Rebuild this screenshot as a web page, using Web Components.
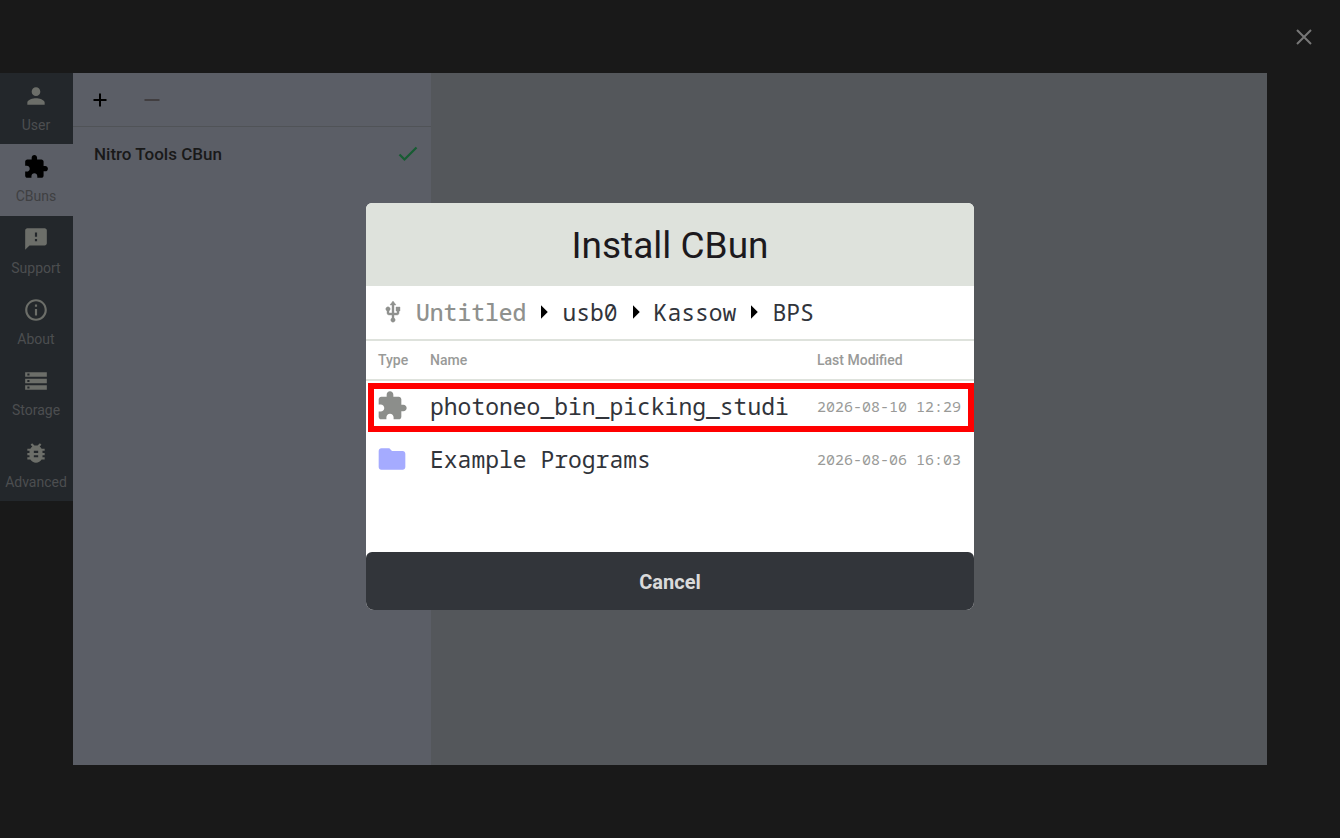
<!DOCTYPE html>
<html lang="en">
<head>
<meta charset="utf-8">
<meta name="viewport" content="width=device-width, initial-scale=1">
<title>Install CBun</title>
<style>
  html, body { height: 100%; }
  body { margin: 0; background: #191919; font-family: Roboto, "Liberation Sans", sans-serif; }
</style>
</head>
<body>
<app-shell>
  <side-nav slot="nav">
    <nav-item icon="person">User</nav-item>
    <nav-item icon="puzzle" active>CBuns</nav-item>
    <nav-item icon="feedback">Support</nav-item>
    <nav-item icon="info">About</nav-item>
    <nav-item icon="storage">Storage</nav-item>
    <nav-item icon="bug">Advanced</nav-item>
  </side-nav>
  <bundle-list slot="list">
    <bundle-item>Nitro Tools CBun</bundle-item>
  </bundle-list>
  <install-dialog slot="dialog">
    <span slot="title">Install CBun</span>
    <path-bar slot="path"></path-bar>
    <file-table slot="files"></file-table>
  </install-dialog>
</app-shell>

<script>
const ICONS = {
  person: '<path d="M12 12c2.210 0 4-1.790 4-4s-1.790-4-4-4-4 1.790-4 4 1.790 4 4 4zm0 2c-2.670 0-8 1.340-8 4v2h16v-2c0-2.660-5.330-4-8-4z"/>',
  puzzle: '<path d="M20.500 11H19V7c0-1.100-.9-2-2-2h-4V3.500C13 2.120 11.880 1 10.500 1S8 2.120 8 3.500V5H4c-1.100 0-1.990.9-1.990 2v3.800H3.500c1.490 0 2.700 1.210 2.700 2.700s-1.210 2.700-2.700 2.700H2V20c0 1.100.9 2 2 2h3.800v-1.500c0-1.490 1.210-2.700 2.700-2.700 1.490 0 2.700 1.210 2.700 2.700V22H17c1.100 0 2-.9 2-2v-4h1.500c1.380 0 2.500-1.120 2.500-2.500S21.880 11 20.500 11z"/>',
  feedback: '<path d="M20 2H4c-1.100 0-1.990.9-1.990 2L2 22l4-4h14c1.100 0 2-.9 2-2V4c0-1.100-.9-2-2-2zm-7 12h-2v-2h2v2zm0-4h-2V6h2v4z"/>',
  info: '<path d="M11 17h2v-6h-2v6zm1-15C6.480 2 2 6.480 2 12s4.480 10 10 10 10-4.480 10-10S17.520 2 12 2zm0 18c-4.410 0-8-3.590-8-8s3.590-8 8-8 8 3.590 8 8-3.590 8-8 8zM11 9h2V7h-2v2z"/>',
  storage: '<path d="M2 20h20v-4H2v4zm2-3h2v2H4v-2zM2 4v4h20V4H2zm4 3H4V5h2v2zm-4 7h20v-4H2v4zm2-3h2v2H4v-2z"/>',
  bug: '<path d="M20 8h-2.810c-.45-.78-1.070-1.450-1.820-1.960L17 4.410 15.590 3l-2.170 2.170C12.960 5.060 12.490 5 12 5s-.96.06-1.410.17L8.410 3 7 4.410l1.620 1.630C7.880 6.550 7.260 7.220 6.810 8H4v2h2.090c-.05.33-.09.66-.09 1v1H4v2h2v1c0 .34.04.67.09 1H4v2h2.810c1.040 1.790 2.970 3 5.190 3s4.150-1.210 5.190-3H20v-2h-2.090c.05-.33.09-.66.09-1v-1h2v-2h-2v-1c0-.34-.04-.67-.09-1H20V8zm-6 8h-4v-2h4v2zm0-4h-4v-2h4v2z"/>',
  folder: '<path d="M10 4H4c-1.100 0-1.990.9-1.990 2L2 18c0 1.100.9 2 2 2h16c1.100 0 2-.9 2-2V8c0-1.100-.9-2-2-2h-8l-2-2z"/>',
  usb: '<path d="M15 7v4h1v2h-3V5h2l-3-4-3 4h2v8H8v-2.070c.7-.37 1.200-1.080 1.200-1.930 0-1.210-.99-2.200-2.200-2.200-1.210 0-2.200.99-2.200 2.200 0 .85.5 1.560 1.200 1.930V13c0 1.110.89 2 2 2h3v3.050c-.71.37-1.200 1.100-1.200 1.950 0 1.220.99 2.200 2.200 2.200 1.210 0 2.200-.98 2.200-2.200 0-.85-.49-1.580-1.200-1.950V15h3c1.110 0 2-.89 2-2v-2h1V7h-4z" stroke="currentColor" stroke-width=".4"/>',
  plus: '<path d="M12 5.500v13M5.500 12h13" fill="none" stroke="currentColor" stroke-width="2"/>',
  minus: '<path d="M4.500 12h15" fill="none" stroke="currentColor" stroke-width="2"/>',
  close: '<path d="M5 5l14 14M19 5L5 19" fill="none" stroke="currentColor" stroke-width="2"/>',
  check: '<path d="M3.500 12.500l5 5L20.500 5.500" fill="none" stroke="currentColor" stroke-width="2.200"/>',
  caret: '<path d="M8 3v18l9-9z"/>'
};

function define(name, html, setup) {
  const template = document.createElement('template');
  template.innerHTML = html;
  customElements.define(name, class extends HTMLElement {
    connectedCallback() {
      if (this.shadowRoot) return;
      this.attachShadow({ mode: 'open' }).append(template.content.cloneNode(true));
      if (setup) setup(this, this.shadowRoot);
    }
  });
}

define('ui-icon', `
  <style>
    :host { display: block; flex: none; width: var(--size, 26px); height: var(--size, 26px); }
    svg { display: block; width: 100%; height: 100%; fill: currentColor; }
  </style>
  <svg viewBox="0 0 24 24" aria-hidden="true"></svg>`,
  (host, root) => { root.querySelector('svg').innerHTML = ICONS[host.getAttribute('name')]; });

define('nav-item', `
  <style>
    :host { display: grid; background: #23272b; color: #6c6e69; --label: #4c4e50; }
    :host([active]) { background: #5b5e66; color: #000; --label: #3f4042; }
    button { display: flex; flex-direction: column; align-items: center; gap: 8px; padding: 10px 1px 0 0;
      border: 0; background: none; color: inherit; font: 14px/16px Roboto, sans-serif; cursor: pointer; }
    span { color: var(--label); }
  </style>
  <button type="button"><ui-icon></ui-icon><span><slot></slot></span></button>`,
  (host, root) => {
    const icon = document.createElement('ui-icon');
    icon.setAttribute('name', host.getAttribute('icon'));
    root.querySelector('ui-icon').replaceWith(icon);
  });

define('side-nav', `
  <style>
    :host { display: block; }
    nav { display: grid; grid-auto-rows: 1fr; height: 428px; }
  </style>
  <nav aria-label="Settings"><slot></slot></nav>`);

define('bundle-item', `
  <style>
    :host { display: flex; align-items: center; justify-content: space-between; height: 54px;
      padding: 0 11px 0 21px; color: #191919; font: 500 17px/20px Roboto, sans-serif; }
    ui-icon { --size: 24px; color: #175c32; }
  </style>
  <slot></slot><ui-icon name="check"></ui-icon>`);

define('bundle-list', `
  <style>
    :host { display: block; background: #5b5e66; }
    header { display: flex; align-items: center; gap: 28px; height: 53px; padding-left: 15px;
      border-bottom: 1px solid #505357; }
    button { display: block; padding: 0; border: 0; background: none; color: #000; cursor: pointer; }
    button:disabled { color: #413e40; }
    ui-icon { --size: 24px; }
  </style>
  <header>
    <button type="button" aria-label="Add"><ui-icon name="plus"></ui-icon></button>
    <button type="button" aria-label="Remove" disabled><ui-icon name="minus"></ui-icon></button>
  </header>
  <slot></slot>`);

define('path-bar', `
  <style>
    :host { display: block; background: #fff; }
    nav { display: flex; align-items: center; gap: 9px; height: 53px; padding-left: 15px;
      border-bottom: 2px solid #dee2dc; color: #31343b;
      font: 23px/30px "Droid Sans Mono", "Noto Sans Mono", "DejaVu Sans Mono", monospace; }
    a { color: inherit; text-decoration: none; }
    .root { margin-left: 2px; color: #8f918e; font-weight: 500; }
    .usb { --size: 24px; color: #8f918e; }
    .sep { --size: 18px; color: #000; }
  </style>
  <nav aria-label="Path">
    <ui-icon class="usb" name="usb"></ui-icon>
    <a class="root" href="#">Untitled</a><ui-icon class="sep" name="caret"></ui-icon>
    <a href="#">usb0</a><ui-icon class="sep" name="caret"></ui-icon>
    <a href="#">Kassow</a><ui-icon class="sep" name="caret"></ui-icon>
    <a href="#">BPS</a>
  </nav>`);

define('file-table', `
  <style>
    :host { display: block; }
    table { width: 100%; border-collapse: separate; border-spacing: 0; table-layout: fixed; }
    th { height: 38px; padding: 0; border-bottom: 2px solid #dee2dc; color: #999a98; text-align: left;
      font: 500 14px/16px Roboto, sans-serif; }
    td { height: 50px; padding: 0 0 3px; color: #31343b; white-space: nowrap; vertical-align: middle;
      font: 23px/30px "Droid Sans Mono", "Noto Sans Mono", "DejaVu Sans Mono", monospace; }
    .type { width: 52px; padding-left: 12px; }
    .date { width: 157px; }
    td.date { color: #999a98; font-size: 15px; }
    ui-icon { --size: 32px; color: #8c8e8b; margin-left: -2px; }
    ui-icon[name=folder] { color: #a5abff; }
    .marked { position: relative; }
    .marked .type::after { content: ""; position: absolute; inset: 2px 0 2px 2px; border: 6px solid #f00; }
  </style>
  <table>
    <thead><tr><th class="type">Type</th><th>Name</th><th class="date">Last Modified</th></tr></thead>
    <tbody>
      <tr class="marked"><td class="type"><ui-icon name="puzzle"></ui-icon></td><td>photoneo_bin_picking_studi</td><td class="date">2026-08-10 12:29</td></tr>
      <tr><td class="type"><ui-icon name="folder"></ui-icon></td><td>Example Programs</td><td class="date">2026-08-06 16:03</td></tr>
    </tbody>
  </table>`);

define('install-dialog', `
  <style>
    :host { display: block; width: 608px; max-width: 100%; }
    section { display: flex; flex-direction: column; border-radius: 6px 6px 8px 8px; background: #fff; overflow: hidden; }
    h1 { margin: 0; padding: 21px 0 18px; background: #dee2dc; color: #1c191d; text-align: center;
      font: 400 37px/44px Roboto, sans-serif; }
    .files { min-height: 211px; }
    button { height: 58px; padding: 2px 0 0; border: 0; border-radius: 6px; background: #32353a; color: #dadada;
      font: 700 20px/24px Roboto, sans-serif; cursor: pointer; }
  </style>
  <section role="dialog" aria-modal="true" aria-labelledby="title">
    <h1 id="title"><slot name="title"></slot></h1>
    <slot name="path"></slot>
    <div class="files"><slot name="files"></slot></div>
    <button type="button">Cancel</button>
  </section>`);

define('app-shell', `
  <style>
    :host { display: grid; box-sizing: border-box; min-height: 100vh; position: relative;
      grid-template: 73px 1fr 73px / 73px 3fr 7fr 73px; background: #191919; }
    .nav { grid-area: 2 / 1; }
    .list { grid-area: 2 / 2; display: grid; }
    main { grid-area: 2 / 3; background: #54575b; }
    .close { grid-area: 1 / 4; place-self: center; padding: 0; border: 0; background: none;
      color: #777; cursor: pointer; }
    .overlay { position: absolute; inset: 0; display: grid; place-items: center;
      padding-bottom: 26px; pointer-events: none; }
    .overlay ::slotted(*) { pointer-events: auto; }
    ui-icon { --size: 24px; }
  </style>
  <div class="nav"><slot name="nav"></slot></div>
  <div class="list"><slot name="list"></slot></div>
  <main></main>
  <button class="close" type="button" aria-label="Close"><ui-icon name="close"></ui-icon></button>
  <div class="overlay"><slot name="dialog"></slot></div>`);
</script>
</body>
</html>
